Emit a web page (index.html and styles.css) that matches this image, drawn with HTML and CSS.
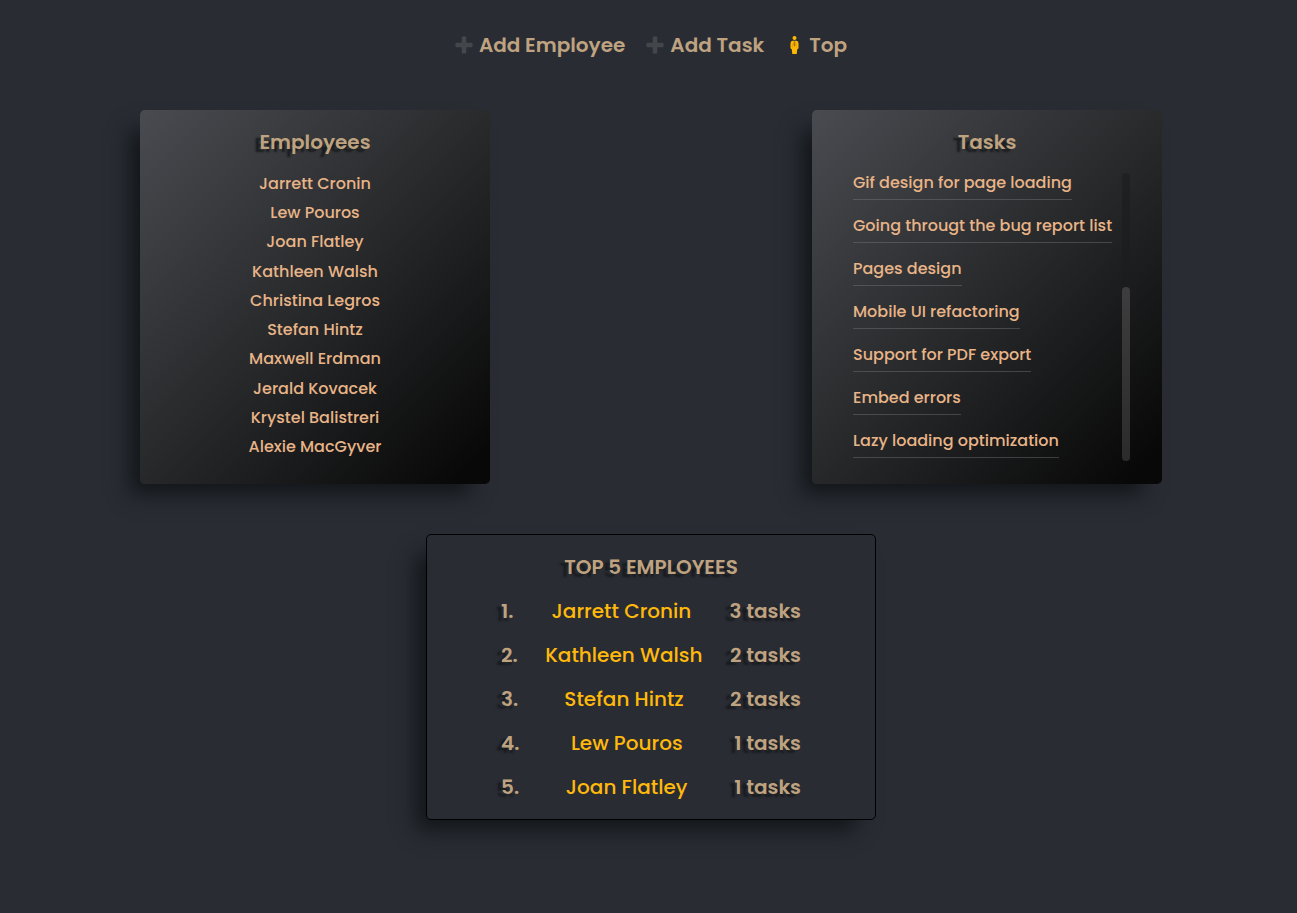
FILE: index.html
```
<!DOCTYPE html>
<html lang="en">
<head>
<meta charset="utf-8">
<meta name="viewport" content="width=device-width, initial-scale=1">
<title>Employees and Tasks</title>
<link rel="stylesheet" href="styles.css">
</head>
<body>
<nav class="nav">
  <a class="nav-link" href="#"><svg class="icon" viewBox="0 0 18 18" aria-hidden="true"><path class="plus" d="M6.700 1.500Q6.700 .3 9 .3T11.300 1.500V6.700H16.500Q17.700 6.700 17.700 9T16.500 11.300H11.300V16.500Q11.300 17.700 9 17.700T6.700 16.500V11.300H1.500Q.3 11.300 .3 9T1.500 6.700H6.700Z"/></svg><span>Add Employee</span></a>
  <a class="nav-link" href="#"><svg class="icon" viewBox="0 0 18 18" aria-hidden="true"><path class="plus" d="M6.700 1.500Q6.700 .3 9 .3T11.300 1.500V6.700H16.500Q17.700 6.700 17.700 9T16.500 11.300H11.300V16.500Q11.300 17.700 9 17.700T6.700 16.500V11.300H1.500Q.3 11.300 .3 9T1.500 6.700H6.700Z"/></svg><span>Add Task</span></a>
  <a class="nav-link" href="#"><svg class="icon" viewBox="0 0 18 18" aria-hidden="true"><circle class="person" cx="9.500" cy="2" r="2"/><path class="person" d="M7.500 4.700H11.500Q13.500 5 13.500 7.500V12Q13.500 13 12.300 13L11.700 18H7.300L6.700 13Q5.500 13 5.500 12V7.500Q5.500 5 7.500 4.700Z"/><path class="seam" d="M7.500 7.500V12M11.500 7.500V12"/><path class="tie" d="M8.800 5.200H10.200L10.500 9L9.500 11L8.500 9Z"/></svg><span>Top</span></a>
</nav>
<main>
  <div class="boards">
    <section class="card">
      <h2 class="title">Employees</h2>
      <ul class="employees">
        <li>Jarrett Cronin</li>
        <li>Lew Pouros</li>
        <li>Joan Flatley</li>
        <li>Kathleen Walsh</li>
        <li>Christina Legros</li>
        <li>Stefan Hintz</li>
        <li>Maxwell Erdman</li>
        <li>Jerald Kovacek</li>
        <li>Krystel Balistreri</li>
        <li>Alexie MacGyver</li>
      </ul>
    </section>
    <section class="card">
      <h2 class="title">Tasks</h2>
      <div class="scroller">
        <ul class="tasks">
          <li>Gif design for page loading</li>
          <li>Going througt the bug report list</li>
          <li>Pages design</li>
          <li>Mobile UI refactoring</li>
          <li>Support for PDF export</li>
          <li>Embed errors</li>
          <li>Lazy loading optimization</li>
        </ul>
        <div class="track"><div class="thumb"></div></div>
      </div>
    </section>
  </div>
  <section class="top">
    <h2 class="title">TOP 5 EMPLOYEES</h2>
    <ol class="ranking">
      <li><span class="strong">1.</span><span class="name">Jarrett Cronin</span><span class="strong">3 tasks</span></li>
      <li><span class="strong">2.</span><span class="name">Kathleen Walsh</span><span class="strong">2 tasks</span></li>
      <li><span class="strong">3.</span><span class="name">Stefan Hintz</span><span class="strong">2 tasks</span></li>
      <li><span class="strong">4.</span><span class="name">Lew Pouros</span><span class="strong">1 tasks</span></li>
      <li><span class="strong">5.</span><span class="name">Joan Flatley</span><span class="strong">1 tasks</span></li>
    </ol>
  </section>
</main>
</body>
</html>
```
FILE: styles.css
```
* {
  box-sizing: border-box;
}

body {
  margin: 0;
  padding: 30px 0 40px 5px;
  background: #2a2c34;
  color: #bfa380;
  font-family: Poppins, Inter, "Open Sans", sans-serif;
  font-size: 16px;
}

ul,
ol {
  margin: 0;
  padding: 0;
  list-style: none;
}

.nav {
  display: flex;
  flex-wrap: wrap;
  justify-content: center;
  gap: 21px;
}

.nav-link {
  display: flex;
  align-items: center;
  gap: 6px;
  color: inherit;
  font-size: 20px;
  font-weight: 600;
  line-height: 30px;
  text-decoration: none;
}

.icon {
  width: 18px;
  height: 18px;
}

.plus {
  fill: #43464b;
}

.person {
  fill: #ffb900;
}

.seam {
  fill: none;
  stroke: #f0a800;
  stroke-width: 1;
}

.tie {
  fill: #a87714;
}

.boards {
  display: flex;
  flex-wrap: wrap;
  justify-content: space-between;
  gap: 50px;
  max-width: 1022px;
  margin: 50px auto;
}

.card,
.top {
  border-radius: 5px;
  box-shadow: -15px 15px 20px -5px #121619;
}

.card {
  display: flex;
  flex: 0 1 350px;
  flex-direction: column;
  padding: 17px 32px 23px;
  background: linear-gradient(135deg, #4a4b50, #28292b 50%, #080808 95%);
}

.title {
  margin: 0;
  font-size: 20px;
  font-weight: 600;
  line-height: 30px;
  text-align: center;
  text-shadow: -5px 3px 2px #181b1d;
}

.employees {
  display: flex;
  flex: 1;
  flex-direction: column;
  justify-content: space-between;
  margin-top: 15px;
  padding-bottom: 2px;
  color: #e8b487;
  font-weight: 500;
  line-height: 24px;
  text-align: center;
}

.scroller {
  display: flex;
  justify-content: space-between;
  margin-top: 16px;
}

.tasks {
  display: flex;
  flex-direction: column;
  align-items: flex-start;
  gap: 16px;
  padding-left: 9px;
  color: #e8b487;
  font-weight: 500;
  line-height: 18px;
}

.tasks li {
  padding: 1px 0 7px;
  border-bottom: 1px solid rgba(128, 128, 132, 0.4);
}

.track {
  display: flex;
  flex-direction: column;
  justify-content: flex-end;
  width: 8px;
  height: 288px;
  border-radius: 4px;
  background: rgba(28, 28, 28, 0.6);
}

.thumb {
  height: 174px;
  border-radius: 4px;
  background: linear-gradient(#3d3d3d, #2b2b2b);
}

.top {
  max-width: 450px;
  margin: 0 auto;
  padding: 17px 74px 10px;
  border: 1px solid #000;
  background: #2a2c34;
}

.ranking {
  margin-top: 7px;
  font-size: 20px;
  line-height: 44px;
}

.ranking li {
  display: flex;
  justify-content: space-between;
}

.strong {
  font-weight: 600;
  text-shadow: -5px 3px 2px #181b1d;
}

.name {
  color: #ffb90a;
  font-weight: 500;
}
```
